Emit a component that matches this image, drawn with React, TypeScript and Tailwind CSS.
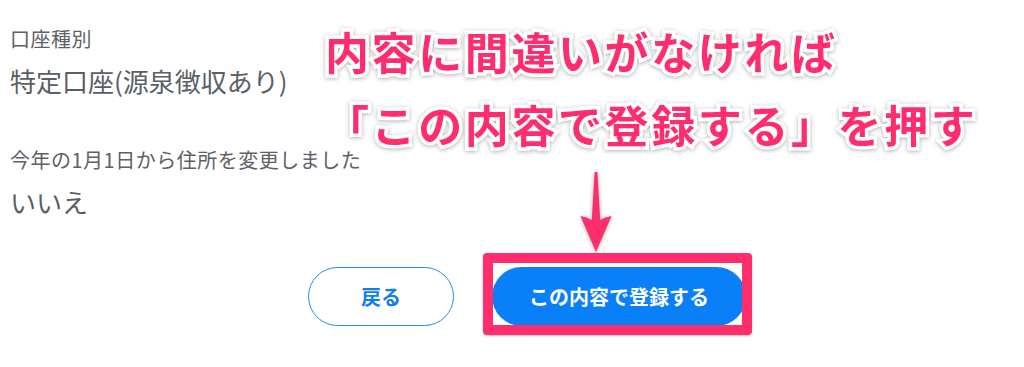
import React from 'react';

const jp = "font-['Noto_Sans_CJK_JP','Noto_Sans',sans-serif]";

const Field: React.FC<{ label: string; value: string; className?: string }> = ({ label, value, className }) => (
  <div className={className}>
    <div className="text-[20px] leading-[28px] tracking-[0.5px] text-[#5d6168]">{label}</div>
    <div className="mt-[10px] text-[26px] leading-[36px] text-[#5a5f66]">{value}</div>
  </div>
);

// Annotation arrow pointing down to the submit button
const DownArrow: React.FC = () => (
  <svg width="36" height="84" viewBox="0 0 36 84" className="drop-shadow-[0_1px_2px_rgba(0,0,0,0.35)]">
    <path
      d="M16.6 2 L19.4 2 L22.2 50 Q27 47 33.5 46 L18 82 L2.5 46 Q9 47 13.8 50 Z"
      fill="#fe2d6c"
    />
  </svg>
);

export default function App() {
  const callout =
    "text-[44px] leading-[56px] font-bold tracking-[2.6px] text-[#ff2d6e] [-webkit-text-stroke:7px_white] [paint-order:stroke_fill] drop-shadow-[0_1px_2px_rgba(0,0,0,0.3)] whitespace-nowrap";

  return (
    <div className={`relative w-[1024px] h-[367px] overflow-hidden bg-white ${jp}`}>
      {/* Confirmation fields */}
      <div className="pl-[10px] pt-[25px]">
        <Field label="口座種別" value="特定口座(源泉徴収あり)" />
        <Field className="mt-[47px]" label="今年の1月1日から住所を変更しました" value="いいえ" />
      </div>

      {/* Actions */}
      <div className="flex items-center gap-[38px] pl-[308px] mt-[47px]">
        <button className="w-[146px] h-[59px] rounded-full border-[1.5px] border-[#2a88f4] bg-white text-[20px] font-bold text-[#0f7ef2]">
          戻る
        </button>
        <button className="w-[254px] h-[59px] rounded-full bg-[#0a80f8] text-[20px] font-bold text-white">
          この内容で登録する
        </button>
      </div>

      {/* Annotation overlay */}
      <div className="absolute left-[325px] top-[23px]">
        <div className={callout}>内容に間違いがなければ</div>
        <div className={`${callout} mt-[17px]`}>「この内容で登録する」を押す</div>
      </div>
      <div className="absolute left-[578px] top-[170px]">
        <DownArrow />
      </div>
      <div className="absolute left-[483px] top-[253px] w-[269px] h-[82px] border-[10px] border-[#fe2d6c] rounded-[4px] shadow-[0_1px_2px_rgba(0,0,0,0.25)]" />
    </div>
  );
}
